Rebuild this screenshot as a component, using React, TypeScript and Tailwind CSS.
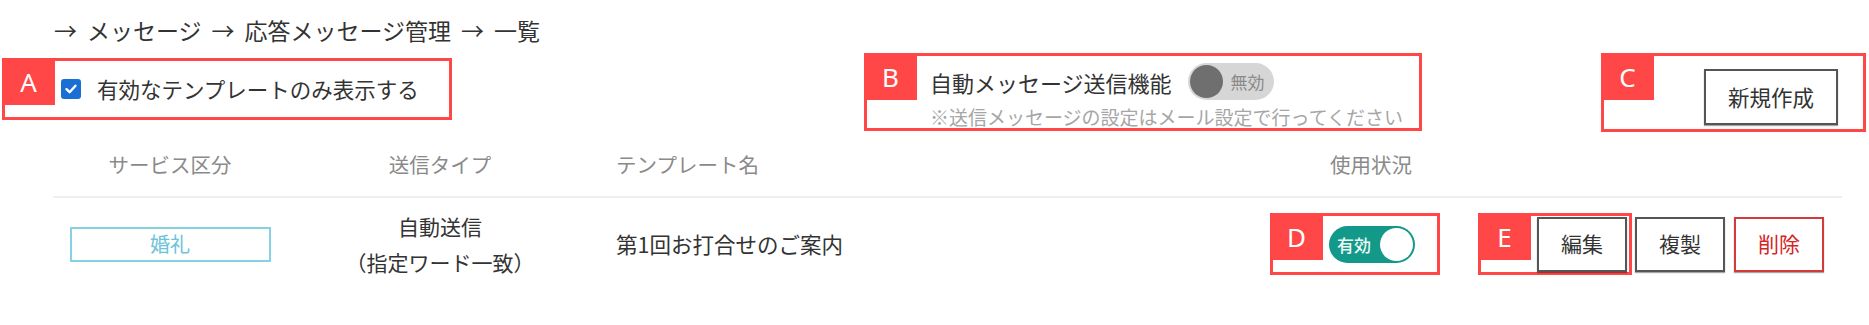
import type { ReactNode } from 'react'

const RED = 'border-[#ff4747]'

function Tag({ letter }: { letter: string }) {
  return (
    <div className="absolute -top-[3px] -left-[3px] w-[53px] h-[47px] bg-[#ff4747] flex items-center justify-center text-white text-[26px] leading-none font-['Noto_Sans',sans-serif]">
      {letter}
    </div>
  )
}

function Note({ letter, className, children }: { letter: string; className: string; children: ReactNode }) {
  return (
    <div className={`relative border-[3px] ${RED} ${className}`}>
      <Tag letter={letter} />
      {children}
    </div>
  )
}

function Toggle({ on }: { on: boolean }) {
  if (on) {
    return (
      <div className="w-[86px] h-[37px] rounded-full bg-[#12998a] flex items-center justify-between pl-[8px] pr-[2px]">
        <span className="text-[17px] leading-none text-[#eefaf6] font-medium">有効</span>
        <span className="w-[33px] h-[33px] rounded-full bg-white" />
      </div>
    )
  }
  return (
    <div className="w-[86px] h-[37px] rounded-full bg-[#d6d6d6] flex items-center justify-between pl-[2px] pr-[9px]">
      <span className="w-[33px] h-[33px] rounded-full bg-[#6f6f6f]" />
      <span className="text-[17px] leading-none text-[#8a8a8a]">無効</span>
    </div>
  )
}

function Btn({ label, danger }: { label: string; danger?: boolean }) {
  return (
    <button
      className={`w-[90px] h-[55px] border-2 bg-white text-[21px] shadow-[0_1px_1px_rgba(0,0,0,0.35)] ${
        danger ? 'border-[#d33a3a] text-[#d32525]' : 'border-[#555] text-[#333]'
      }`}
    >
      {label}
    </button>
  )
}

export default function App() {
  return (
    <div className="w-[1869px] h-[325px] bg-white overflow-hidden font-['Noto_Sans_CJK_JP','Noto_Sans',sans-serif] text-[#333]">
      {/* breadcrumb */}
      <div className="h-[53px] pl-[54px] pt-[13px] flex items-start gap-[10px] text-[23px] leading-[34px]">
        <span>→</span>
        <span>メッセージ</span>
        <span>→</span>
        <span>応答メッセージ管理</span>
        <span>→</span>
        <span>一覧</span>
      </div>

      {/* toolbar */}
      <div className="h-[79px] flex items-start">
        <Note letter="A" className="ml-[2px] mt-[5px] w-[450px] h-[62px] flex items-center pl-[56px]">
          <span className="w-[20px] h-[20px] rounded-[3px] bg-[#1a6fd4] flex items-center justify-center">
            <svg width="14" height="14" viewBox="0 0 14 14" fill="none">
              <path d="M2.5 7.2 L5.6 10.2 L11.5 3.8" stroke="white" strokeWidth="2.4" strokeLinecap="round" strokeLinejoin="round" />
            </svg>
          </span>
          <span className="ml-[16px] text-[21.5px] leading-none">有効なテンプレートのみ表示する</span>
        </Note>

        <Note letter="B" className="ml-[412px] w-[558px] h-[78px] flex flex-col pl-[63px] pt-[7px]">
          <div className="h-[37px] flex items-center">
            <span className="text-[22px] leading-none">自動メッセージ送信機能</span>
            <div className="ml-[16px]">
              <Toggle on={false} />
            </div>
          </div>
          <div className="mt-[6px] text-[19px] leading-[22px] text-[#a6a6a6]">
            ※送信メッセージの設定はメール設定で行ってください
          </div>
        </Note>

        <Note letter="C" className="ml-[179px] w-[265px] h-[79px] pl-[100px] pt-[13px]">
          <button className="w-[134px] h-[56px] border-2 border-[#555] bg-white text-[21.5px] text-[#333] shadow-[0_1px_1px_rgba(0,0,0,0.35)]">
            新規作成
          </button>
        </Note>
      </div>

      {/* table */}
      <div className="ml-[53px] w-[1789px]">
        <div className="h-[66px] flex items-center border-b-2 border-[#efefef] text-[20.5px] text-[#8a8a8a]">
          <div className="w-[234px] text-center">サービス区分</div>
          <div className="w-[306px] text-center">送信タイプ</div>
          <div className="w-[677px] pl-[23px]">テンプレート名</div>
          <div className="w-[170px] pl-[60px]">使用状況</div>
        </div>

        <div className="h-[92px] flex items-center">
          <div className="w-[234px] flex justify-center">
            <div className="w-[201px] h-[35px] border-2 border-[#86d2e4] flex items-center justify-center text-[20px] text-[#6cc3da]">
              婚礼
            </div>
          </div>
          <div className="w-[306px] text-center text-[21px] leading-[36px]">
            <div>自動送信</div>
            <div>（指定ワード一致）</div>
          </div>
          <div className="w-[677px] pl-[23px] text-[21.5px]">第1回お打合せのご案内</div>
          <Note letter="D" className="w-[170px] h-[62px] flex items-center pl-[56px]">
            <Toggle on />
          </Note>
          <div className="flex items-center">
            <Note letter="E" className="ml-[38px] w-[154px] h-[62px] flex items-center pl-[56px]">
              <Btn label="編集" />
            </Note>
            <div className="ml-[3px]">
              <Btn label="複製" />
            </div>
            <div className="ml-[9px]">
              <Btn label="削除" danger />
            </div>
          </div>
        </div>
      </div>
    </div>
  )
}
